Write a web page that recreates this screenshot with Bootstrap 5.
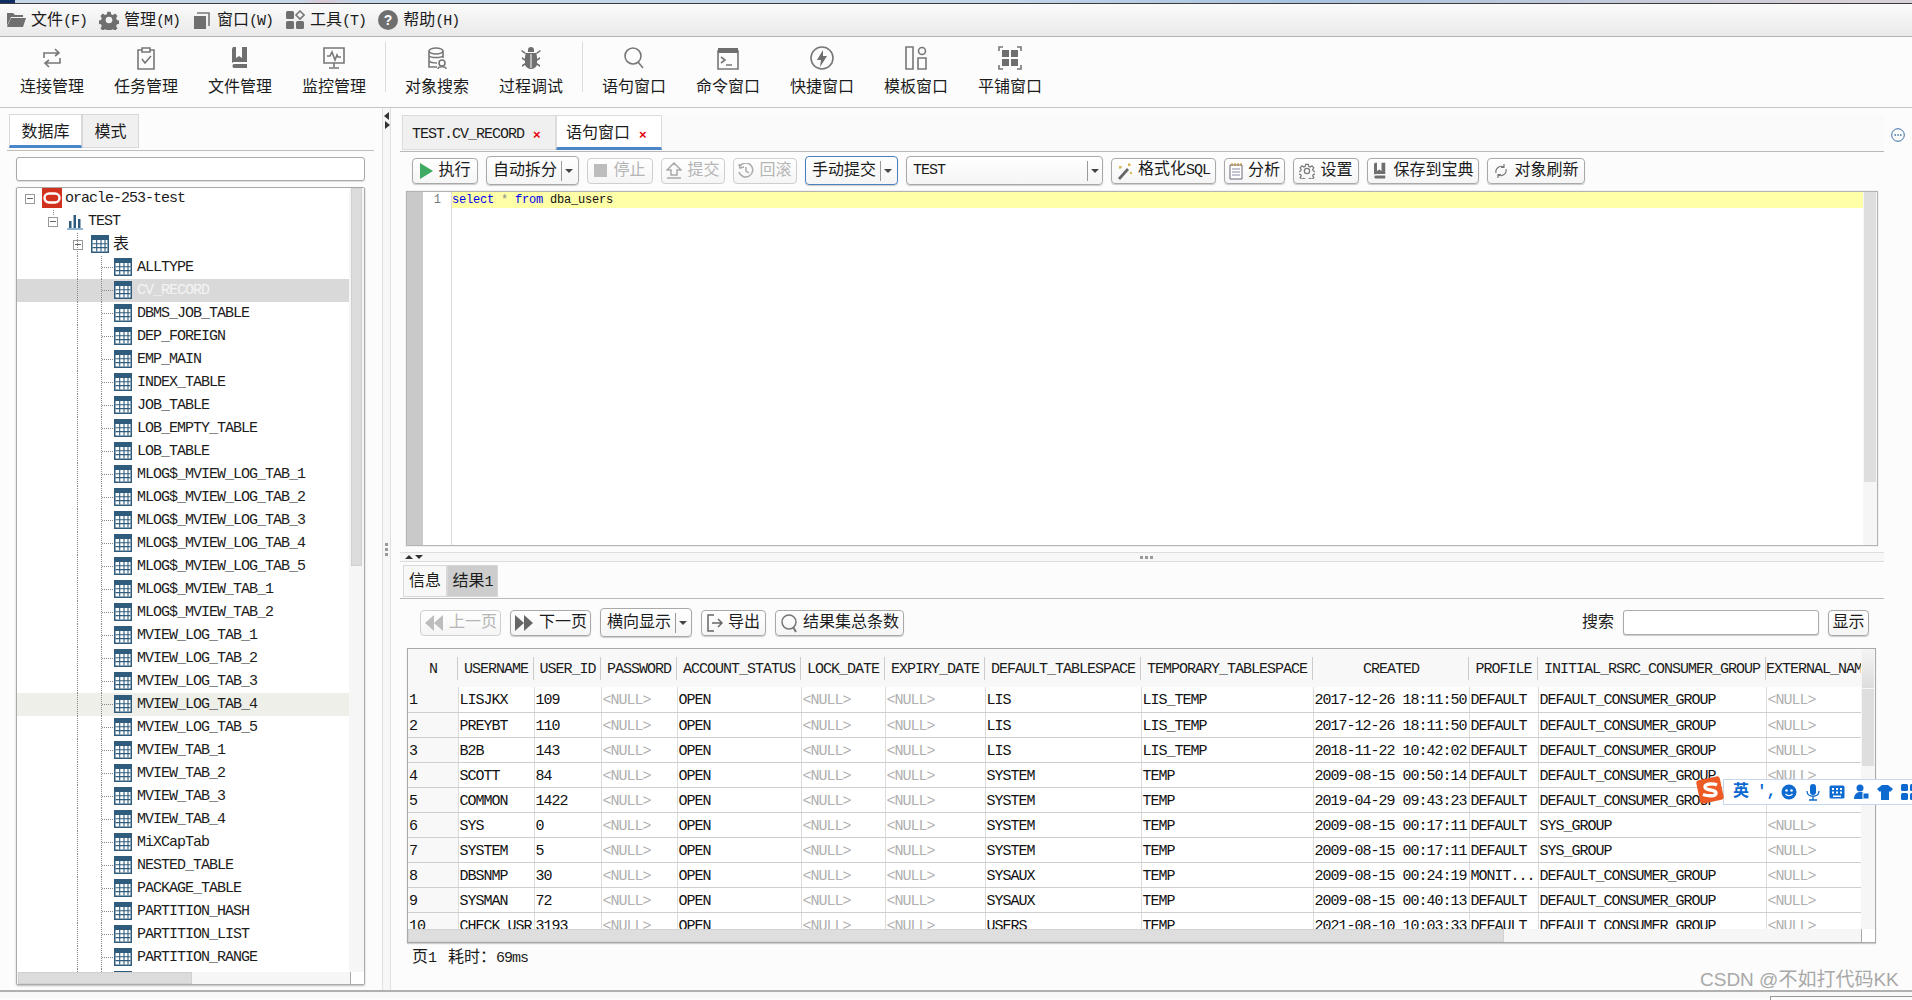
<!DOCTYPE html>
<html lang="zh">
<head>
<meta charset="utf-8">
<title>SQL 工具</title>
<link href="https://cdn.jsdelivr.net/npm/bootstrap@5.3.0/dist/css/bootstrap.min.css" rel="stylesheet">
<style>
html,body{height:1000px;overflow:hidden}
body{width:1912px;background:#fcfcfc;color:#1c1c1c;font-family:"Liberation Mono","Noto Sans CJK SC",monospace;font-size:16px;line-height:20px;position:relative}
.lt{font-size:15px;letter-spacing:-1px}
.cjk16{font-size:16px;letter-spacing:0}
svg{display:block;flex:none}
.ico{fill:#6f6f6f;stroke:none}
.ln{fill:none;stroke:#777;stroke-width:1.6}
.deskstrip{height:4px;background:linear-gradient(90deg,#0f2f63 0 15px,#c6d7ea 15px 300px,#d9c9d4 320px,#c3d6ea 360px 1000px,#a9c3df 1300px,#d8d0d8 1850px);border-bottom:1px solid #3c3c3c}
.menubar{height:33px;background:linear-gradient(#fbfbfb,#e9e9e9);border-bottom:1px solid #b2b2b2;padding-left:6px;gap:12px}
.mitem{gap:5px;white-space:nowrap}
.mitem>span{padding-top:2px}
.toolrow{height:71px;background:#fcfcfc;border-bottom:1px solid #c4c4c4;padding-left:5px}
.tool{width:94px;padding-top:9px;text-align:center}
.tool svg{margin:0 auto 8px}
.toolsep{width:1px;height:50px;margin:5px 4px 0;background:#dcdcdc}
.mainarea{height:884px;border-bottom:2px solid #b0b0b0}
.leftpane{width:382px;padding-top:6px}
.tabline{margin-left:7px;width:367px;height:37px;border-bottom:1px solid #bdbdbd;padding-left:2px}
.ltab{height:34px;line-height:36px;text-align:center;border:1px solid #d8d8d8}
.ltab.on{width:73px;background:#fff;border-bottom:3px solid #4a86c8}
.ltab.off{width:57px;background:#f0f0f0}
.searchbox{display:block;margin:6px 0 0 16px;width:349px;height:24px;border:1px solid #aaa;border-radius:3px;background:#fff;box-shadow:0 1px 1px #ddd}
.treebox{margin:6px 0 0 16px;width:349px;height:798px;border:1px solid #aaa;border-radius:2px;background:#fff;box-shadow:0 1px 2px #bbb;overflow:hidden}
.treemain{height:784px}
.treelist{width:334px;height:785px;overflow:hidden;margin:-1px 0 0;padding:0;list-style:none}
.trow{height:23px;line-height:22px;white-space:nowrap;display:flex;align-items:center}
.trow svg{margin:0 5px 2px 0}
.leaf{padding-left:97px;background-image:repeating-linear-gradient(180deg,#888 0 1px,transparent 1px 2px),repeating-linear-gradient(180deg,#888 0 1px,transparent 1px 2px),repeating-linear-gradient(90deg,#888 0 1px,transparent 1px 2px);background-size:1px 100%,1px 100%,12px 1px;background-position:60px 0,84px 0,85px 50%;background-repeat:no-repeat}
.leaf.sel{background-color:#d9d9d9;color:#f4f4f4}
.leaf.hov{background-color:#efefea}
.exp{width:10px;height:10px;border:1px solid #999;flex:none;background:linear-gradient(#666,#666) center/6px 1px no-repeat}
.r0{padding-left:8px}.r1{padding-left:31px;background:repeating-linear-gradient(180deg,#888 0 1px,transparent 1px 2px) 36px 0/1px 5px no-repeat}
.r2{padding-left:56px;background:repeating-linear-gradient(180deg,#888 0 1px,transparent 1px 2px) 60px 0/1px 100% no-repeat}
.r0 .exp{margin-right:7px}.r1 .exp{margin-right:8px}.r2 .exp{margin-right:8px}
.r0 svg{margin-right:3px}.r1 svg{margin-right:4px}.r2 svg{margin-right:4px}
.vtrack{width:15px;background:#f6f6f6;padding:0 2px}
.vthumb{height:378px;background:#dcdcdc;border:1px solid #d0d0d0}
.htrack{height:13px;background:#f6f6f6}
.hthumb{height:12px;background:#dcdcdc;border:1px solid #d0d0d0;margin-left:1px}
.corner{width:14px;height:13px;border:1px solid #aaa;border-width:0 0 0 1px;margin-left:auto;background:#fff}
.vsplit{width:9px;background:#f7f7f7;border-left:1px solid #e0e0e0;border-right:1px solid #e0e0e0;padding-top:4px}
.vsplit svg{margin:0 auto 1px}
.dotsv{width:3px;margin:414px auto 0;gap:2px}
.dotsv i,.dotsh i{display:block;width:3px;height:3px;background:#999}
.rightpane{width:1521px}
.rhead{height:44px;padding-top:7px}
.rtabs{margin-left:9px;width:1484px;height:37px;border-bottom:1px solid #b8b8b8;padding-left:2px;background:#fafafa}
.ptab{height:35px;line-height:37px;border:1px solid #dcdcdc;gap:9px;padding-left:9px}
.ptab.off{width:154px;background:#f0f0f0}
.ptab.on{width:106px;background:#fff;border-bottom:3px solid #4a86c8}
.xred{color:#e8000c;font-weight:700;font-size:13px;font-family:"Liberation Sans",sans-serif;letter-spacing:0}
.moreico{margin:13px 0 0 7px}
.sqlbar{margin:4px 0 0 21px;height:29px;gap:8px}
.tb{height:26px;padding:0;gap:5px;border:1px solid #a9a9a9;border-radius:4px;background:linear-gradient(#fff,#f5f5f5);box-shadow:0 1px 1px #ccc;color:#1c1c1c;font-size:16px;line-height:20px;--bs-btn-hover-bg:#eee;white-space:nowrap}
.tb.dis{color:#b5b5b5;border-color:#cfcfcf;opacity:1;box-shadow:none}
.tb.tall{height:29px}
.tb.act{border-color:#4a7fc0}
.tb.drop{gap:0;justify-content:flex-start;padding-left:6px}
.dv{flex:none;width:1px;height:20px;background:#999;margin-left:4px}
.car{flex:none;width:0;height:0;border:4px solid transparent;border-top:4px solid #444;border-bottom:0;margin:0 3px}
.bw41{width:41px}.bw61{width:61px}.bw64{width:64px}.bw65{width:65px}.bw66{width:66px}.bw81{width:81px}.bw92{width:92px}.bw93{width:93px}.bw98{width:98px}.bw105{width:105px}.bw112{width:112px}.bw129{width:129px}.bw197{width:197px}
.selbox .dv{margin-left:auto}
.editor{margin:6px 0 0 15px;width:1472px;height:355px;border:1px solid #b4b4b4;background:#fff;box-shadow:0 0 1px #bbb}
.gut1{width:16px;background:#c9c9c9}
.gut2{width:29px;border-right:1px solid #ddd;font-size:12px;line-height:16px;color:#777;text-align:right;padding-right:10px;letter-spacing:0}
.code{flex:1;height:16px;background:#ffffa8;font-size:12px;line-height:16px;white-space:pre;color:#111;letter-spacing:-.2px}
.kw{color:#0000ee}.op{color:#888}
.evtrack{width:14px;background:#f6f6f6;padding:0 1px}
.evthumb{height:290px;background:#dedede}
.hsplit{margin:6px 0 0 9px;width:1484px;height:10px;border-top:1px solid #ddd;border-bottom:1px solid #ddd;background:#f7f7f7;padding-left:5px;gap:2px}
.tri-u{width:0;height:0;border:4px solid transparent;border-top:0;border-bottom:4px solid #333}
.tri-d{width:0;height:0;border:4px solid transparent;border-bottom:0;border-top:4px solid #333}
.dotsh{margin-left:715px;gap:2px}
.rtabs2{margin:3px 0 0 9px;width:1484px;height:34px;border-bottom:1px solid #bbb;padding-left:3px}
.rt{height:32px;line-height:32px;text-align:center;border:1px solid #d8d8d8}
.rt.off{width:44px;background:#f8f8f8}
.rt.on{width:51px;background:#cdcdcd}
.resbar{margin:9px 0 0 29px;width:1449px;height:29px;gap:9px}
.findlabel{margin-left:auto}
.findbox{width:196px;height:25px;border:1px solid #aaa;border-radius:3px;background:#fff;box-shadow:0 1px 1px #ccc}
.gridbox{margin:11px 0 0 16px;width:1469px;height:295px;border:1px solid #aaa;box-shadow:0 1px 1px #ccc;background:#fff}
.gridtop{height:280px}
.gridscroll{width:1454px;height:280px;overflow:hidden}
.rtable{width:1454px;table-layout:fixed;margin:0;border-collapse:collapse}
.rtable>thead>tr>th{height:38px;padding:3px 0 0;font-weight:400;text-align:center;vertical-align:middle;white-space:nowrap;overflow:hidden;border:0;background:#f8f8f8 linear-gradient(#ccc,#ccc) right center/1px 23px no-repeat;color:#1c1c1c}
.rtable>tbody>tr>td{height:25px;padding:3px 0 0 1px;line-height:21px;vertical-align:top;white-space:nowrap;overflow:hidden;border:0;border-bottom:1px solid #cfcfcf;border-right:1px solid #dcdcdc;color:#111;background:#fff}
.rtable>tbody>tr>td:first-child{background:#f8f8f8}
.rtable>tbody>tr>td.nul{color:#b0b0b0}
.c1{width:50px}.c2{width:76px}.c3{width:67px}.c4{width:76px}.c5{width:124px}.c6{width:84px}.c7{width:100px}.c8{width:156px}.c9{width:172px}.c10{width:156px}.c11{width:69px}.c12{width:228px}.c13{width:96px}
.gvtrack{width:14px;background:#f6f6f6;padding:0 1px}
.gvhead{height:39px;background:linear-gradient(#f4f4f4,#ddd)}
.gvthumb{height:77px;background:#dedede;margin-top:1px}
.gridh{height:13px;background:#f6f6f6}
.gthumb{width:1096px;background:#dedede;border:1px solid #d2d2d2}
.gcorner{width:14px;margin-left:auto;border:1px solid #aaa;border-width:0 0 0 1px;background:#fff}
.statusline{height:30px;line-height:30px;padding-left:21px;gap:12px}
.footstrip{height:6px;background:#f8f8f8;position:relative}
.ftip{position:absolute;left:1770px;top:4px;width:142px;height:4px;border-top:1px solid #999;border-left:1px solid #999}
.imebar{position:absolute;left:1695px;top:775px;z-index:5;height:30px}
.imelogo{margin-right:-2px;position:relative;z-index:1}
.imebody{height:26px;width:189px;margin-top:4px;background:#fff;border:1px solid #c5d8ee;border-right:0;gap:8px;padding-left:9px;color:#0d6ad0;font-weight:700;font-size:16px;overflow:hidden}
.imebody>span{width:16px;text-align:center}
.watermark{position:absolute;left:1700px;top:970px;font-family:"Liberation Sans","Noto Sans CJK SC",sans-serif;font-size:19px;color:#a8a8a8;white-space:nowrap;z-index:5}
</style>
</head>
<body>
<svg width="0" height="0" class="position-absolute">
<defs>
<symbol id="i-table" viewBox="0 0 18 18"><rect x="0" y="0" width="18" height="18" fill="#2f5c7c"/><rect x="1.500" y="5" width="15" height="11.500" fill="#fff"/><path d="M1.500 8.700h15M1.500 12.600h15M5.700 5v11.500M10 5v11.500M14 5v11.500" stroke="#2f5c7c" stroke-width="1.100" fill="none"/></symbol>
<symbol id="i-gear" viewBox="0 0 24 24"><path class="ico" d="M10 2h4l.6 3 2.200 1 2.600-1.700 2.800 2.800-1.700 2.600 1 2.300 3 .6v4l-3 .6-1 2.200 1.700 2.600-2.800 2.800-2.600-1.700-2.200 1-.6 3h-4l-.6-3-2.300-1-2.600 1.700-2.800-2.800 1.700-2.600-1-2.200-3-.6v-4l3-.6 1-2.300-1.700-2.600 2.800-2.800 2.600 1.700 2.300-1zM12 8a4 4 0 1 0 0 8 4 4 0 0 0 0-8z" fill-rule="evenodd"/></symbol>
<symbol id="i-book" viewBox="0 0 20 24"><path class="ico" d="M3 1h3v11l3-2 3 2V1h5v15H5a3 3 0 0 0-3 1V3zM4 18h13v4H5a2 2 0 0 1-1-4z"/></symbol>
<symbol id="i-dl" viewBox="0 0 20 20"><path d="M10 2v16L1 10zM19 2v16l-9-8z" fill="#bdbdbd"/></symbol>
<symbol id="i-dr" viewBox="0 0 20 20"><path d="M1 2v16l9-8zM10 2v16l9-8z" fill="#666"/></symbol>
</defs>
</svg>

<div class="deskstrip"></div>

<nav class="menubar d-flex align-items-center">
  <div class="mitem d-flex align-items-center">
    <svg width="20" height="20" viewBox="0 0 20 20"><path class="ico" d="M1 3h6l2 2h8v2H5L1 16zM5 8h15l-3 9H1z"/></svg>
    <span>文件<span class="lt">(F)</span></span>
  </div>
  <div class="mitem d-flex align-items-center">
    <svg width="20" height="20"><use href="#i-gear"/></svg>
    <span>管理<span class="lt">(M)</span></span>
  </div>
  <div class="mitem d-flex align-items-center">
    <svg width="20" height="20" viewBox="0 0 20 20"><path class="ico" d="M2 6h12v13H2z"/><path class="ln" d="M5 3h12v13"/></svg>
    <span>窗口<span class="lt">(W)</span></span>
  </div>
  <div class="mitem d-flex align-items-center">
    <svg width="20" height="20" viewBox="0 0 20 20"><rect class="ico" x="1" y="1" width="8" height="8" rx="1.500"/><rect class="ico" x="1" y="11" width="8" height="8" rx="1.500"/><rect class="ico" x="11" y="11" width="8" height="8" rx="1.500"/><path class="ln" d="M15 1l4 4-4 4-4-4z"/></svg>
    <span>工具<span class="lt">(T)</span></span>
  </div>
  <div class="mitem d-flex align-items-center">
    <svg width="20" height="20" viewBox="0 0 20 20"><circle class="ico" cx="10" cy="10" r="10"/><text x="10" y="15" text-anchor="middle" font-size="14" font-weight="700" fill="#fff" font-family="Liberation Sans">?</text></svg>
    <span>帮助<span class="lt">(H)</span></span>
  </div>
</nav>

<div class="toolrow d-flex">
  <div class="tool"><svg width="24" height="24" viewBox="0 0 24 24"><path class="ln" d="M4 12V7h15M15 3l4 4-4 3M20 12v5H5M9 21l-4-4 4-3"/></svg>连接管理</div>
  <div class="tool"><svg width="24" height="24" viewBox="0 0 24 24"><path class="ln" d="M8 4H4v19h16V4h-4M8 2h8v4H8zM8 13l3 4 6-7"/></svg>任务管理</div>
  <div class="tool"><svg width="24" height="24"><use href="#i-book"/></svg>文件管理</div>
  <div class="tool"><svg width="24" height="24" viewBox="0 0 24 24"><path class="ln" d="M2 2h20v15H2zM12 17v4M7 22h10M5 10h3l2-4 3 8 2-5 1 2h3"/></svg>监控管理</div>
  <div class="toolsep"></div>
  <div class="tool"><svg width="24" height="24" viewBox="0 0 24 24"><path class="ln" d="M4 5v16h8M18 5v7"/><ellipse class="ln" cx="11" cy="5" rx="7" ry="3"/><path class="ln" d="M4 10c2 2 12 2 14 0M4 15c2 2 6 2 8 2"/><circle class="ln" cx="17" cy="17" r="3"/><path class="ln" d="M13 23c0-3 8-3 8 0"/></svg>对象搜索</div>
  <div class="tool"><svg width="24" height="24" viewBox="0 0 24 24"><path class="ico" d="M9 4a3 3 0 0 1 6 0v2H9zM7 7h10c1 2 1 4 1 6l3-2v2l-3 2v2l3 2v2l-3-2c-1 2-3 4-6 4s-5-2-6-4l-3 2v-2l3-2v-2l-3-2v-2l3 2c0-2 0-4 1-6zM3 4l4 3-1 1-4-3zM21 4l-4 3 1 1 4-3z"/><path d="M12 8v14" stroke="#fff"/></svg>过程调试</div>
  <div class="toolsep"></div>
  <div class="tool"><svg width="24" height="24" viewBox="0 0 24 24"><circle class="ln" cx="11" cy="10" r="8"/><path class="ln" d="M16 16l5 6" stroke-width="2.400"/></svg>语句窗口</div>
  <div class="tool"><svg width="24" height="24" viewBox="0 0 24 24"><path class="ln" d="M2 5h20v18H2z"/><path class="ico" d="M2 2h20v5H2z"/><path class="ln" d="M5 11l4 3-4 3M10 19h6"/></svg>命令窗口</div>
  <div class="tool"><svg width="24" height="24" viewBox="0 0 24 24"><circle class="ln" cx="12" cy="12" r="11"/><path class="ico" d="M13 4l-6 10h4l-1 7 7-11h-4z"/></svg>快捷窗口</div>
  <div class="tool"><svg width="24" height="24" viewBox="0 0 24 24"><path class="ln" d="M2 1h7v22H2z" stroke-width="2"/><circle class="ln" cx="18" cy="5" r="3.500" stroke-width="2"/><path class="ln" d="M14 12h8v11h-8z" stroke-width="2"/></svg>模板窗口</div>
  <div class="tool"><svg width="24" height="24" viewBox="0 0 24 24"><path class="ico" d="M4 4h7v7H4zM13 4h7v7h-7zM4 13h7v7H4zM13 13h7v7h-7z"/><path class="ln" d="M1 5V1h4M19 1h4v4M23 19v4h-4M5 23H1v-4" stroke-width="1"/></svg>平铺窗口</div>
</div>

<main class="mainarea d-flex">
  <section class="leftpane">
    <div class="tabline d-flex">
      <div class="ltab on">数据库</div>
      <div class="ltab off">模式</div>
    </div>
    <input class="searchbox" type="text" aria-label="search">
    <div class="treebox">
      <div class="treemain d-flex">
        <ul class="treelist lt">
          <li class="trow r0"><span class="exp"></span><svg width="20" height="20" viewBox="0 0 20 20"><rect width="20" height="20" fill="#d0321e"/><rect x="2.500" y="5.500" width="15" height="9" rx="4.500" fill="none" stroke="#fff" stroke-width="2.400"/></svg>oracle-253-test</li>
          <li class="trow r1"><span class="exp"></span><svg width="18" height="18" viewBox="0 0 18 18"><path d="M1 17h16" stroke="#6a9cc4" stroke-width="1.500"/><path d="M3 9h2.500v7H3zM7.500 3H10v13H7.500zM12 7h2.500v9H12z" fill="#2f5c7c"/></svg>TEST</li>
          <li class="trow r2"><span class="exp"></span><svg width="18" height="18"><use href="#i-table"/></svg><span class="cjk16">表</span></li>
          <li class="trow leaf"><svg width="18" height="18"><use href="#i-table"/></svg>ALLTYPE</li>
          <li class="trow leaf sel"><svg width="18" height="18"><use href="#i-table"/></svg>CV_RECORD</li>
          <li class="trow leaf"><svg width="18" height="18"><use href="#i-table"/></svg>DBMS_JOB_TABLE</li>
          <li class="trow leaf"><svg width="18" height="18"><use href="#i-table"/></svg>DEP_FOREIGN</li>
          <li class="trow leaf"><svg width="18" height="18"><use href="#i-table"/></svg>EMP_MAIN</li>
          <li class="trow leaf"><svg width="18" height="18"><use href="#i-table"/></svg>INDEX_TABLE</li>
          <li class="trow leaf"><svg width="18" height="18"><use href="#i-table"/></svg>JOB_TABLE</li>
          <li class="trow leaf"><svg width="18" height="18"><use href="#i-table"/></svg>LOB_EMPTY_TABLE</li>
          <li class="trow leaf"><svg width="18" height="18"><use href="#i-table"/></svg>LOB_TABLE</li>
          <li class="trow leaf"><svg width="18" height="18"><use href="#i-table"/></svg>MLOG$_MVIEW_LOG_TAB_1</li>
          <li class="trow leaf"><svg width="18" height="18"><use href="#i-table"/></svg>MLOG$_MVIEW_LOG_TAB_2</li>
          <li class="trow leaf"><svg width="18" height="18"><use href="#i-table"/></svg>MLOG$_MVIEW_LOG_TAB_3</li>
          <li class="trow leaf"><svg width="18" height="18"><use href="#i-table"/></svg>MLOG$_MVIEW_LOG_TAB_4</li>
          <li class="trow leaf"><svg width="18" height="18"><use href="#i-table"/></svg>MLOG$_MVIEW_LOG_TAB_5</li>
          <li class="trow leaf"><svg width="18" height="18"><use href="#i-table"/></svg>MLOG$_MVIEW_TAB_1</li>
          <li class="trow leaf"><svg width="18" height="18"><use href="#i-table"/></svg>MLOG$_MVIEW_TAB_2</li>
          <li class="trow leaf"><svg width="18" height="18"><use href="#i-table"/></svg>MVIEW_LOG_TAB_1</li>
          <li class="trow leaf"><svg width="18" height="18"><use href="#i-table"/></svg>MVIEW_LOG_TAB_2</li>
          <li class="trow leaf"><svg width="18" height="18"><use href="#i-table"/></svg>MVIEW_LOG_TAB_3</li>
          <li class="trow leaf hov"><svg width="18" height="18"><use href="#i-table"/></svg>MVIEW_LOG_TAB_4</li>
          <li class="trow leaf"><svg width="18" height="18"><use href="#i-table"/></svg>MVIEW_LOG_TAB_5</li>
          <li class="trow leaf"><svg width="18" height="18"><use href="#i-table"/></svg>MVIEW_TAB_1</li>
          <li class="trow leaf"><svg width="18" height="18"><use href="#i-table"/></svg>MVIEW_TAB_2</li>
          <li class="trow leaf"><svg width="18" height="18"><use href="#i-table"/></svg>MVIEW_TAB_3</li>
          <li class="trow leaf"><svg width="18" height="18"><use href="#i-table"/></svg>MVIEW_TAB_4</li>
          <li class="trow leaf"><svg width="18" height="18"><use href="#i-table"/></svg>MiXCapTab</li>
          <li class="trow leaf"><svg width="18" height="18"><use href="#i-table"/></svg>NESTED_TABLE</li>
          <li class="trow leaf"><svg width="18" height="18"><use href="#i-table"/></svg>PACKAGE_TABLE</li>
          <li class="trow leaf"><svg width="18" height="18"><use href="#i-table"/></svg>PARTITION_HASH</li>
          <li class="trow leaf"><svg width="18" height="18"><use href="#i-table"/></svg>PARTITION_LIST</li>
          <li class="trow leaf"><svg width="18" height="18"><use href="#i-table"/></svg>PARTITION_RANGE</li>
          <li class="trow leaf"><svg width="18" height="18"><use href="#i-table"/></svg></li>
        </ul>
        <div class="vtrack"><div class="vthumb"></div></div>
      </div>
      <div class="htrack d-flex">
        <div class="hthumb w-50"></div>
        <div class="corner"></div>
      </div>
    </div>
  </section>

  <div class="vsplit">
    <svg width="6" height="8" viewBox="0 0 6 8"><path d="M5 0v8L0 4z" fill="#333"/></svg>
    <svg width="6" height="8" viewBox="0 0 6 8"><path d="M1 0v8l5-4z" fill="#333"/></svg>
    <div class="dotsv d-flex flex-column"><i></i><i></i><i></i></div>
  </div>

  <section class="rightpane">
    <div class="rhead d-flex">
      <div class="rtabs d-flex">
        <div class="ptab off d-flex"><span class="lt">TEST.CV_RECORD</span><span class="xred">×</span></div>
        <div class="ptab on d-flex"><span>语句窗口</span><span class="xred">×</span></div>
      </div>
      <svg class="moreico" width="14" height="14" viewBox="0 0 14 14"><circle cx="7" cy="7" r="6.300" fill="none" stroke="#3a6ea5"/><path d="M3.500 6.200h1.500v1.500H3.500zM6.300 6.200h1.500v1.500H6.300zM9 6.200h1.500v1.500H9z" fill="#3a6ea5"/></svg>
    </div>

    <div class="sqlbar d-flex align-items-center">
      <button class="btn tb bw66 d-inline-flex align-items-center justify-content-center" type="button"><svg width="14" height="16" viewBox="0 0 14 16"><path d="M1 0l13 8-13 8z" fill="#3eaa62"/></svg>执行</button>
      <button class="btn tb tall drop bw93 d-inline-flex align-items-center" type="button">自动拆分<span class="dv"></span><span class="car"></span></button>
      <button class="btn tb dis bw66 d-inline-flex align-items-center justify-content-center" type="button" disabled><svg width="14" height="14"><rect width="13" height="13" fill="#bdbdbd"/></svg>停止</button>
      <button class="btn tb dis bw64 d-inline-flex align-items-center justify-content-center" type="button" disabled><svg width="16" height="18" viewBox="0 0 16 18"><path d="M8 1l7 7h-4v5H5V8H1zM1 16h14" fill="none" stroke="#aaa" stroke-width="1.500"/></svg>提交</button>
      <button class="btn tb dis bw64 d-inline-flex align-items-center justify-content-center" type="button" disabled><svg width="16" height="16" viewBox="0 0 16 16"><path d="M2 3a7 7 0 1 1-1 6M1 1l1 4 4-1M8 4v4l3 2" fill="none" stroke="#aaa" stroke-width="1.500"/></svg>回滚</button>
      <button class="btn tb tall act drop bw93 d-inline-flex align-items-center" type="button">手动提交<span class="dv"></span><span class="car"></span></button>
      <button class="btn tb tall drop selbox bw197 d-inline-flex align-items-center" type="button"><span class="lt">TEST</span><span class="dv"></span><span class="car"></span></button>
      <button class="btn tb bw105 d-inline-flex align-items-center justify-content-center" type="button"><svg width="16" height="18" viewBox="0 0 16 18"><path d="M1 16L10 6l2 2-9 10z" fill="#666"/><path d="M12 1v3M14 3h-3M3 4v3M5 5H2M14 10v2M15 11h-2" stroke="#c9a227"/></svg><span>格式化<span class="lt">SQL</span></span></button>
      <button class="btn tb bw61 d-inline-flex align-items-center justify-content-center" type="button"><svg width="14" height="18" viewBox="0 0 14 18"><path d="M1 3h12v14H1z" fill="#fff" stroke="#667"/><path d="M3 7h8M3 10h8M3 13h8" stroke="#88a"/><path d="M3 1v3M6 1v3M9 1v3M12 1v3" stroke="#c08a20"/></svg>分析</button>
      <button class="btn tb bw66 d-inline-flex align-items-center justify-content-center" type="button"><svg width="16" height="16" viewBox="0 0 24 24"><path d="M10 2h4l.6 3 2.200 1 2.600-1.700 2.800 2.800-1.700 2.600 1 2.300 3 .6v4l-3 .6-1 2.200 1.700 2.600-2.800 2.800-2.600-1.700-2.200 1-.6 3h-4l-.6-3-2.300-1-2.600 1.700-2.800-2.800 1.700-2.600-1-2.200-3-.6v-4l3-.6 1-2.300-1.700-2.600 2.800-2.800 2.600 1.700 2.300-1z" fill="none" stroke="#777" stroke-width="1.800"/><circle cx="12" cy="12" r="4" fill="none" stroke="#777" stroke-width="1.800"/></svg>设置</button>
      <button class="btn tb bw112 d-inline-flex align-items-center justify-content-center" type="button"><svg width="16" height="18"><use href="#i-book"/></svg>保存到宝典</button>
      <button class="btn tb bw98 d-inline-flex align-items-center justify-content-center" type="button"><svg width="16" height="16" viewBox="0 0 16 16"><path d="M3 10a5.500 5.500 0 0 1 8-6M13 6a5.500 5.500 0 0 1-8 6M11 1v3.500h-3M5 15v-3.500h3" fill="none" stroke="#777" stroke-width="1.200"/></svg>对象刷新</button>
    </div>

    <div class="editor d-flex">
      <div class="gut1"></div>
      <div class="gut2 lt">1</div>
      <div class="code"><span class="kw">select</span> <span class="op">*</span> <span class="kw">from</span> dba_users</div>
      <div class="evtrack"><div class="evthumb"></div></div>
    </div>

    <div class="hsplit d-flex align-items-center">
      <span class="tri-u"></span><span class="tri-d"></span>
      <div class="dotsh d-flex"><i></i><i></i><i></i></div>
    </div>

    <div class="rtabs2 d-flex">
      <div class="rt off">信息</div>
      <div class="rt on">结果<span class="lt">1</span></div>
    </div>

    <div class="resbar d-flex align-items-center">
      <button class="btn tb dis bw81 d-inline-flex align-items-center justify-content-center" type="button" disabled><svg width="20" height="20"><use href="#i-dl"/></svg>上一页</button>
      <button class="btn tb bw81 d-inline-flex align-items-center justify-content-center" type="button"><svg width="20" height="20"><use href="#i-dr"/></svg>下一页</button>
      <button class="btn tb tall drop bw92 d-inline-flex align-items-center" type="button">横向显示<span class="dv"></span><span class="car"></span></button>
      <button class="btn tb bw65 d-inline-flex align-items-center justify-content-center" type="button"><svg width="16" height="20" viewBox="0 0 16 20"><path d="M7 2H1v16h6M5 10h10M11 6l4 4-4 4" fill="none" stroke="#666" stroke-width="1.500"/></svg>导出</button>
      <button class="btn tb bw129 d-inline-flex align-items-center justify-content-center" type="button"><svg width="18" height="20" viewBox="0 0 18 20"><circle cx="9" cy="9" r="7" fill="none" stroke="#777" stroke-width="1.500"/><path d="M13 14l3 5" stroke="#777" stroke-width="2"/></svg>结果集总条数</button>
      <span class="findlabel">搜索</span>
      <input class="findbox" type="text" aria-label="search">
      <button class="btn tb bw41 d-inline-flex align-items-center justify-content-center" type="button">显示</button>
    </div>

    <div class="gridbox lt">
      <div class="gridtop d-flex">
        <div class="gridscroll">
          <table class="table rtable">
            <colgroup><col class="c1"><col class="c2"><col class="c3"><col class="c4"><col class="c5"><col class="c6"><col class="c7"><col class="c8"><col class="c9"><col class="c10"><col class="c11"><col class="c12"><col class="c13"></colgroup>
            <thead><tr><th>N</th><th>USERNAME</th><th>USER_ID</th><th>PASSWORD</th><th>ACCOUNT_STATUS</th><th>LOCK_DATE</th><th>EXPIRY_DATE</th><th>DEFAULT_TABLESPACE</th><th>TEMPORARY_TABLESPACE</th><th>CREATED</th><th>PROFILE</th><th>INITIAL_RSRC_CONSUMER_GROUP</th><th>EXTERNAL_NAME</th></tr></thead>
            <tbody>
              <tr><td>1</td><td>LISJKX</td><td>109</td><td class="nul">&lt;NULL&gt;</td><td>OPEN</td><td class="nul">&lt;NULL&gt;</td><td class="nul">&lt;NULL&gt;</td><td>LIS</td><td>LIS_TEMP</td><td>2017-12-26 18:11:50</td><td>DEFAULT</td><td>DEFAULT_CONSUMER_GROUP</td><td class="nul">&lt;NULL&gt;</td></tr>
              <tr><td>2</td><td>PREYBT</td><td>110</td><td class="nul">&lt;NULL&gt;</td><td>OPEN</td><td class="nul">&lt;NULL&gt;</td><td class="nul">&lt;NULL&gt;</td><td>LIS</td><td>LIS_TEMP</td><td>2017-12-26 18:11:50</td><td>DEFAULT</td><td>DEFAULT_CONSUMER_GROUP</td><td class="nul">&lt;NULL&gt;</td></tr>
              <tr><td>3</td><td>B2B</td><td>143</td><td class="nul">&lt;NULL&gt;</td><td>OPEN</td><td class="nul">&lt;NULL&gt;</td><td class="nul">&lt;NULL&gt;</td><td>LIS</td><td>LIS_TEMP</td><td>2018-11-22 10:42:02</td><td>DEFAULT</td><td>DEFAULT_CONSUMER_GROUP</td><td class="nul">&lt;NULL&gt;</td></tr>
              <tr><td>4</td><td>SCOTT</td><td>84</td><td class="nul">&lt;NULL&gt;</td><td>OPEN</td><td class="nul">&lt;NULL&gt;</td><td class="nul">&lt;NULL&gt;</td><td>SYSTEM</td><td>TEMP</td><td>2009-08-15 00:50:14</td><td>DEFAULT</td><td>DEFAULT_CONSUMER_GROUP</td><td class="nul">&lt;NULL&gt;</td></tr>
              <tr><td>5</td><td>COMMON</td><td>1422</td><td class="nul">&lt;NULL&gt;</td><td>OPEN</td><td class="nul">&lt;NULL&gt;</td><td class="nul">&lt;NULL&gt;</td><td>SYSTEM</td><td>TEMP</td><td>2019-04-29 09:43:23</td><td>DEFAULT</td><td>DEFAULT_CONSUMER_GROUP</td><td class="nul">&lt;NULL&gt;</td></tr>
              <tr><td>6</td><td>SYS</td><td>0</td><td class="nul">&lt;NULL&gt;</td><td>OPEN</td><td class="nul">&lt;NULL&gt;</td><td class="nul">&lt;NULL&gt;</td><td>SYSTEM</td><td>TEMP</td><td>2009-08-15 00:17:11</td><td>DEFAULT</td><td>SYS_GROUP</td><td class="nul">&lt;NULL&gt;</td></tr>
              <tr><td>7</td><td>SYSTEM</td><td>5</td><td class="nul">&lt;NULL&gt;</td><td>OPEN</td><td class="nul">&lt;NULL&gt;</td><td class="nul">&lt;NULL&gt;</td><td>SYSTEM</td><td>TEMP</td><td>2009-08-15 00:17:11</td><td>DEFAULT</td><td>SYS_GROUP</td><td class="nul">&lt;NULL&gt;</td></tr>
              <tr><td>8</td><td>DBSNMP</td><td>30</td><td class="nul">&lt;NULL&gt;</td><td>OPEN</td><td class="nul">&lt;NULL&gt;</td><td class="nul">&lt;NULL&gt;</td><td>SYSAUX</td><td>TEMP</td><td>2009-08-15 00:24:19</td><td>MONIT...</td><td>DEFAULT_CONSUMER_GROUP</td><td class="nul">&lt;NULL&gt;</td></tr>
              <tr><td>9</td><td>SYSMAN</td><td>72</td><td class="nul">&lt;NULL&gt;</td><td>OPEN</td><td class="nul">&lt;NULL&gt;</td><td class="nul">&lt;NULL&gt;</td><td>SYSAUX</td><td>TEMP</td><td>2009-08-15 00:40:13</td><td>DEFAULT</td><td>DEFAULT_CONSUMER_GROUP</td><td class="nul">&lt;NULL&gt;</td></tr>
              <tr><td>10</td><td>CHECK_USR</td><td>3193</td><td class="nul">&lt;NULL&gt;</td><td>OPEN</td><td class="nul">&lt;NULL&gt;</td><td class="nul">&lt;NULL&gt;</td><td>USERS</td><td>TEMP</td><td>2021-08-10 10:03:33</td><td>DEFAULT</td><td>DEFAULT_CONSUMER_GROUP</td><td class="nul">&lt;NULL&gt;</td></tr>
            </tbody>
          </table>
        </div>
        <div class="gvtrack"><div class="gvhead"></div><div class="gvthumb"></div></div>
      </div>
      <div class="gridh d-flex"><div class="gthumb"></div><div class="gcorner"></div></div>
    </div>

    <div class="statusline d-flex">
      <span>页<span class="lt">1</span></span>
      <span>耗时：<span class="lt">69ms</span></span>
    </div>
  </section>
</main>

<div class="footstrip"><div class="ftip"></div></div>

<div class="imebar d-flex align-items-start">
  <svg class="imelogo" width="30" height="30" viewBox="0 0 30 30"><rect x="3" y="3" width="24" height="24" rx="3" transform="rotate(-12 15 15)" fill="#ee5a24"/><path d="M22 10c-3-1.500-12-2-12 2 0 4 11 2 11 6 0 4-9 3-13 1.500" fill="none" stroke="#fff" stroke-width="3.400"/></svg>
  <div class="imebody d-flex align-items-center">
    <span>英</span>
    <span>&#39;,</span>
    <svg width="16" height="16" viewBox="0 0 16 16"><circle cx="8" cy="8" r="7.500" fill="#0d6ad0"/><circle cx="5.500" cy="6.500" r="1.300" fill="#fff"/><circle cx="10.500" cy="6.500" r="1.300" fill="#fff"/><path d="M4.500 10c2 2 5 2 7 0" stroke="#fff" stroke-width="1.300" fill="none"/></svg>
    <svg width="16" height="18" viewBox="0 0 14 18"><rect x="4" y="1" width="6" height="11" rx="3" fill="#0d6ad0"/><path d="M1 8c0 7 12 7 12 0M7 13v4M3 17h8" fill="none" stroke="#0d6ad0" stroke-width="1.300"/></svg>
    <svg width="16" height="14" viewBox="0 0 16 14"><rect x=".5" y=".5" width="15" height="13" rx="1.500" fill="#0d6ad0"/><path d="M3 3h2v2H3zM7 3h2v2H7zM11 3h2v2h-2zM3 6.500h2v2H3zM7 6.500h2v2H7zM11 6.500h2v2h-2zM4 10.500h8v1.500H4z" fill="#fff"/></svg>
    <svg width="16" height="16" viewBox="0 0 16 16"><circle cx="7" cy="4" r="3.500" fill="#0d6ad0"/><path d="M1 15c0-8 8-8 10-6v6z" fill="#0d6ad0"/><rect x="10" y="9" width="6" height="6" fill="#0d6ad0" stroke="#fff"/></svg>
    <svg width="16" height="15" viewBox="0 0 16 15"><path d="M5 0h6l5 4-3 3-1-1v9H4V6L3 7 0 4z" fill="#0d6ad0"/></svg>
    <svg width="16" height="16" viewBox="0 0 16 16"><rect x="0" y="0" width="7" height="7" rx="1.500" fill="#0d6ad0"/><rect x="9" y="0" width="7" height="7" rx="1.500" fill="#0d6ad0"/><rect x="0" y="9" width="7" height="7" rx="1.500" fill="#0d6ad0"/><rect x="9" y="9" width="7" height="7" rx="1.500" fill="#0d6ad0"/></svg>
  </div>
</div>

<div class="watermark">CSDN @不如打代码KK</div>
</body>
</html>
